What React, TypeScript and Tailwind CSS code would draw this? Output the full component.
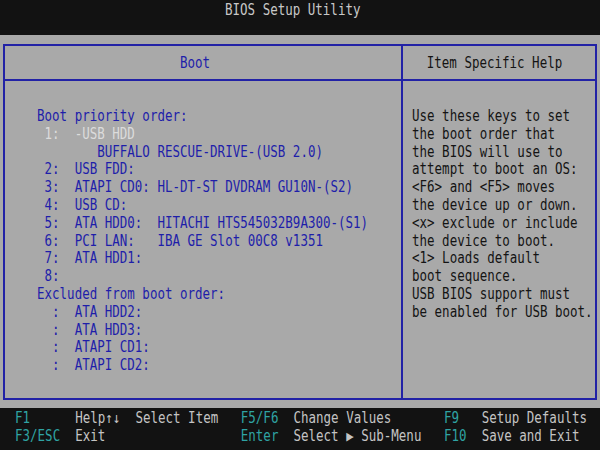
const mono = "font-['DejaVu_Sans_Mono',monospace] text-[12.5px]";

type Seg = { t: string; c?: string };

function Line({ children, className = "" }: { children: React.ReactNode; className?: string }) {
  return (
    <div className={`h-[17.8px] leading-[17.8px] whitespace-pre scale-y-[1.2] ${className}`}>
      {children}
    </div>
  );
}

const bootLines: { text: string; active?: boolean }[] = [
  { text: "Boot priority order:" },
  { text: " 1:  -USB HDD", active: true },
  { text: "        BUFFALO RESCUE-DRIVE-(USB 2.0)" },
  { text: " 2:  USB FDD:" },
  { text: " 3:  ATAPI CD0: HL-DT-ST DVDRAM GU10N-(S2)" },
  { text: " 4:  USB CD:" },
  { text: " 5:  ATA HDD0:  HITACHI HTS545032B9A300-(S1)" },
  { text: " 6:  PCI LAN:   IBA GE Slot 00C8 v1351" },
  { text: " 7:  ATA HDD1:" },
  { text: " 8:" },
  { text: "Excluded from boot order:" },
  { text: "  :  ATA HDD2:" },
  { text: "  :  ATA HDD3:" },
  { text: "  :  ATAPI CD1:" },
  { text: "  :  ATAPI CD2:" },
];

const helpLines = [
  "Use these keys to set",
  "the boot order that",
  "the BIOS will use to",
  "attempt to boot an OS:",
  "<F6> and <F5> moves",
  "the device up or down.",
  "<x> exclude or include",
  "the device to boot.",
  "<1> Loads default",
  "boot sequence.",
  "USB BIOS support must",
  "be enabled for USB boot.",
];

const K = "text-[#2fa3a3]";
const D = "text-[#c4c4c4]";

const footer: Seg[][] = [
  [
    { t: "F1", c: K },
    { t: "      Help↑↓  Select Item   ", c: D },
    { t: "F5/F6", c: K },
    { t: "  Change Values       ", c: D },
    { t: "F9", c: K },
    { t: "   Setup Defaults", c: D },
  ],
  [
    { t: "F3/ESC", c: K },
    { t: "  Exit                  ", c: D },
    { t: "Enter", c: K },
    { t: "  Select ▶ Sub-Menu   ", c: D },
    { t: "F10", c: K },
    { t: "  Save and Exit", c: D },
  ],
];

export default function App() {
  return (
    <div className={`w-[600px] h-[450px] flex flex-col bg-[#121212] ${mono}`}>
      {/* title bar */}
      <div className="h-[35px] pl-[225px] pt-[1px] text-[#c8c8c8]">
        <Line>BIOS Setup Utility</Line>
      </div>

      {/* main gray area */}
      <div className="h-[373px] bg-[#a9a9a9] pt-[9px] pb-[8px] px-[3px] flex">
        <div className="flex-1 border-2 border-[#2222a6] flex">
          {/* left panel */}
          <div className="w-[398px] flex flex-col border-r-2 border-[#2222a6]">
            <div className="h-[35px] border-b-2 border-[#2222a6] flex items-center justify-center pr-[16px] text-[#1e1eaa]">
              <Line>Boot</Line>
            </div>
            <div className="pt-[26px] pl-[32px] text-[#1e1eaa]">
              {bootLines.map((l, i) => (
                <Line key={i} className={l.active ? "text-[#dcdcdc]" : ""}>
                  {l.text}
                </Line>
              ))}
            </div>
          </div>

          {/* right panel */}
          <div className="flex-1 flex flex-col">
            <div className="h-[35px] border-b-2 border-[#2222a6] flex items-center justify-center pr-[9px] text-[#141414]">
              <Line>Item Specific Help</Line>
            </div>
            <div className="pt-[26px] pl-[9px] text-[#141414]">
              {helpLines.map((l, i) => (
                <Line key={i}>{l}</Line>
              ))}
            </div>
          </div>
        </div>
      </div>

      {/* footer */}
      <div className="flex-1 pl-[15px] pt-[1px]">
        {footer.map((row, i) => (
          <Line key={i} className="h-[18px] leading-[18px]">
            {row.map((s, j) => (
              <span key={j} className={s.c}>
                {s.t}
              </span>
            ))}
          </Line>
        ))}
      </div>
    </div>
  );
}
